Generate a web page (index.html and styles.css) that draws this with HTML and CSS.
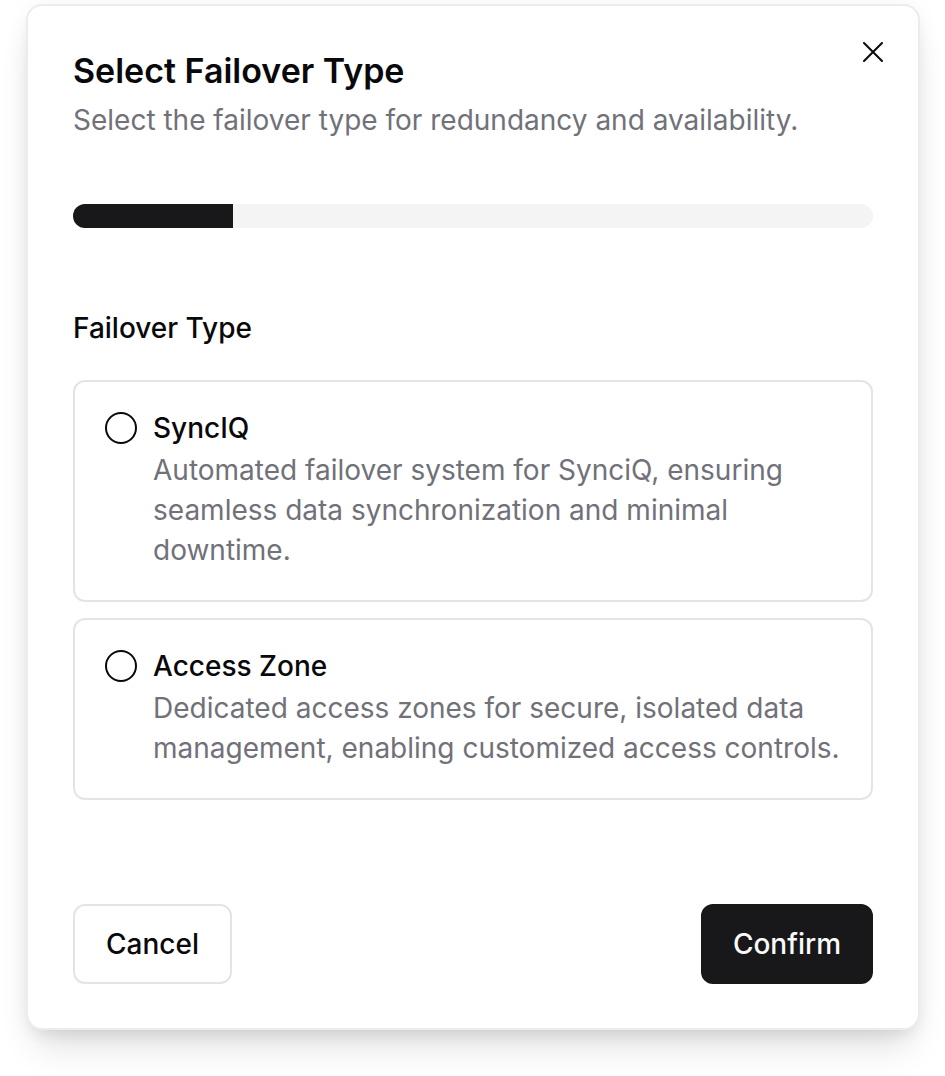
FILE: index.html
```html
<!DOCTYPE html>
<html lang="en">
<head>
    <meta charset="UTF-8">
    <meta name="viewport" content="width=device-width, initial-scale=1.0">
    <title>Select Failover Type</title>
    <link rel="stylesheet" href="styles.css">
</head>
<body>
    <div class="dialog">
        <button class="close-btn" aria-label="Close">
            <svg width="20" height="20" viewBox="0 0 20 20" fill="none" stroke="currentColor" stroke-width="2" stroke-linecap="round">
                <path d="M1 1L19 19M19 1L1 19"/>
            </svg>
        </button>

        <div class="dialog-header">
            <h2 class="dialog-title">Select Failover Type</h2>
            <p class="dialog-desc">Select the failover type for redundancy and availability.</p>
        </div>

        <div class="progress">
            <div class="progress-fill" style="width: 20%"></div>
        </div>

        <div class="field">
            <div class="field-label">Failover Type</div>
            <div class="options">
                <label class="option">
                    <input type="radio" name="failover" value="synciq">
                    <div class="option-text">
                        <div class="option-title">SyncIQ</div>
                        <div class="option-desc">Automated failover system for SynciQ, ensuring seamless data synchronization and minimal downtime.</div>
                    </div>
                </label>
                <label class="option">
                    <input type="radio" name="failover" value="access-zone">
                    <div class="option-text">
                        <div class="option-title">Access Zone</div>
                        <div class="option-desc">Dedicated access zones for secure, isolated data management, enabling customized access controls.</div>
                    </div>
                </label>
            </div>
        </div>

        <div class="dialog-footer">
            <button class="btn btn-outline">Cancel</button>
            <button class="btn btn-primary">Confirm</button>
        </div>
    </div>
</body>
</html>
```

FILE: styles.css
```css
body {
    font-family: Inter, "Noto Sans", sans-serif;
    background-color: #ffffff;
    color: #09090b;
    margin: 0;
    padding: 0 0 46px;
}

.dialog {
    position: relative;
    box-sizing: border-box;
    width: 894px;
    margin: 4px 0 0 26px;
    padding: 45px 45px 44px;
    border: 2px solid #ececee;
    border-radius: 16px;
    background-color: #ffffff;
    box-shadow: 0 24px 36px -10px rgba(0, 0, 0, 0.14), 0 8px 16px -6px rgba(0, 0, 0, 0.08), 0 0 24px rgba(0, 0, 0, 0.04);
}

.close-btn {
    position: absolute;
    top: 36px;
    right: 35px;
    width: 20px;
    height: 20px;
    padding: 0;
    border: none;
    background: none;
    color: #09090b;
    cursor: pointer;
}

.close-btn svg {
    display: block;
}

.dialog-title {
    margin: 0;
    font-size: 34px;
    line-height: 40px;
    font-weight: 600;
}

.dialog-desc {
    margin: 9px 0 0;
    font-size: 28px;
    line-height: 40px;
    color: #71717a;
}

.progress {
    height: 24px;
    margin-top: 64px;
    border-radius: 12px;
    background-color: #f4f4f5;
    overflow: hidden;
}

.progress-fill {
    height: 100%;
    background-color: #18181b;
}

.field {
    margin-top: 82px;
}

.field-label {
    font-size: 28px;
    line-height: 36px;
    font-weight: 500;
}

.options {
    display: flex;
    flex-direction: column;
    gap: 16px;
    margin-top: 34px;
}

.option {
    display: flex;
    gap: 16px;
    padding: 31px 30px 30px;
    border: 2px solid #e4e4e7;
    border-radius: 12px;
    cursor: pointer;
}

.option input[type="radio"] {
    appearance: none;
    flex-shrink: 0;
    width: 32px;
    height: 32px;
    margin: -1px 0 0;
    border: 2px solid #09090b;
    border-radius: 50%;
}

.option-title {
    font-size: 28px;
    line-height: 30px;
    font-weight: 500;
}

.option-desc {
    margin-top: 7px;
    font-size: 28px;
    line-height: 40px;
    color: #71717a;
}

.dialog-footer {
    display: flex;
    justify-content: space-between;
    margin-top: 104px;
}

.btn {
    height: 80px;
    padding: 0 31px;
    border-radius: 12px;
    font-family: inherit;
    font-size: 28px;
    font-weight: 500;
    cursor: pointer;
}

.btn-outline {
    border: 2px solid #e4e4e7;
    background-color: #ffffff;
    color: #09090b;
}

.btn-primary {
    padding: 0 30px;
    border: 2px solid #18181b;
    background-color: #18181b;
    color: #fafafa;
}
```
